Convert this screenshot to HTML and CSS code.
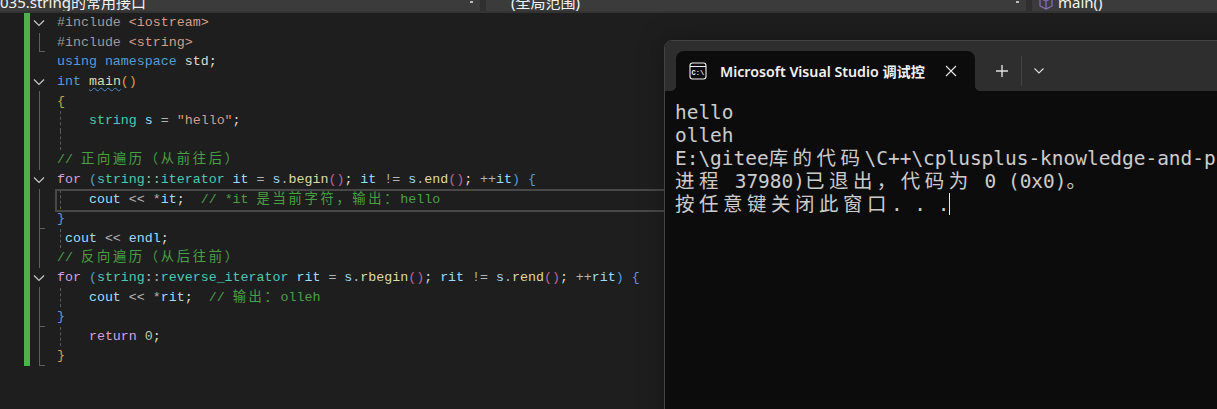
FILE: index.html
```html
<!DOCTYPE html>
<html lang="zh">
<head>
<meta charset="utf-8">
<title>Visual Studio</title>
<link rel="stylesheet" href="styles.css">
</head>
<body>
<div class="app">
  <header class="navbar">
    <div class="combo combo-file"><span class="combo-text">035.string的常用接口</span><span class="combo-arrow"></span></div>
    <div class="combo combo-scope"><span class="combo-text">(全局范围)</span><span class="combo-arrow"></span></div>
    <div class="combo combo-member">
      <svg class="cube" width="16" height="16" viewBox="0 0 16 16"><path d="M8 1 14 4v8l-6 3-6-3V4zM2 4l6 3 6-3M8 7v8" fill="none" stroke="#8a6fc0" stroke-width="1.2"/></svg>
      <span class="combo-text">main()</span>
    </div>
  </header>
  <main class="editor">
    <div class="change-bar"></div>
    <div class="lines">
      <div class="row"><span class="fold open"><svg width="14" height="8" viewBox="0 0 14 8"><path d="M2 1.5 7 6.5 12 1.5" fill="none" stroke="#c8c8c8" stroke-width="1.2"/></svg></span><code class="code"><span class="pp">#include </span><span class="str">&lt;iostream&gt;</span></code></div>
      <div class="row"><span class="fold end"></span><code class="code"><span class="pp">#include </span><span class="str">&lt;string&gt;</span></code></div>
      <div class="row"><span class="fold"></span><code class="code"><span class="kw">using namespace</span> <span class="plain">std;</span></code></div>
      <div class="row"><span class="fold open"><svg width="14" height="8" viewBox="0 0 14 8"><path d="M2 1.5 7 6.5 12 1.5" fill="none" stroke="#c8c8c8" stroke-width="1.2"/></svg></span><code class="code"><span class="kw">int</span> <span class="fn squiggle">main</span><span class="brace-o">()</span></code></div>
      <div class="row"><span class="fold line"></span><code class="code"><span class="brace-o">{</span></code></div>
      <div class="row"><span class="fold line"></span><code class="code guide">    <span class="ty">string</span> <span class="var">s</span> <span class="op">=</span> <span class="str">"hello"</span><span class="plain">;</span></code></div>
      <div class="row"><span class="fold line"></span><code class="code guide"> </code></div>
      <div class="row"><span class="fold line"></span><code class="code"><span class="cm">// <span class="cjk">正向遍历（从前往后）</span></span></code></div>
      <div class="row"><span class="fold open"><svg width="14" height="8" viewBox="0 0 14 8"><path d="M2 1.5 7 6.5 12 1.5" fill="none" stroke="#c8c8c8" stroke-width="1.2"/></svg></span><code class="code"><span class="ctl">for</span> <span class="brace-b">(</span><span class="ty">string</span><span class="op">::</span><span class="ty">iterator</span> <span class="var">it</span> <span class="op">=</span> <span class="var">s</span><span class="op">.</span><span class="fn">begin</span><span class="paren">()</span><span class="plain">;</span> <span class="var">it</span> <span class="op">!=</span> <span class="var">s</span><span class="op">.</span><span class="fn">end</span><span class="paren">()</span><span class="plain">;</span> <span class="op">++</span><span class="var">it</span><span class="brace-b">)</span> <span class="brace-b">{</span></code></div>
      <div class="row current"><span class="fold line"></span><code class="code guide">    <span class="var">cout</span> <span class="op">&lt;&lt;</span> <span class="op">*</span><span class="var">it</span><span class="plain">;</span>  <span class="cm">// *it <span class="cjk">是当前字符，输出：</span>hello</span></code></div>
      <div class="row"><span class="fold tick"></span><code class="code"><span class="brace-b">}</span></code></div>
      <div class="row"><span class="fold line"></span><code class="code guide"> <span class="var">cout</span> <span class="op">&lt;&lt;</span> <span class="var">endl</span><span class="plain">;</span></code></div>
      <div class="row"><span class="fold line"></span><code class="code"><span class="cm">// <span class="cjk">反向遍历（从后往前）</span></span></code></div>
      <div class="row"><span class="fold open"><svg width="14" height="8" viewBox="0 0 14 8"><path d="M2 1.5 7 6.5 12 1.5" fill="none" stroke="#c8c8c8" stroke-width="1.2"/></svg></span><code class="code"><span class="ctl">for</span> <span class="brace-b">(</span><span class="ty">string</span><span class="op">::</span><span class="ty">reverse_iterator</span> <span class="var">rit</span> <span class="op">=</span> <span class="var">s</span><span class="op">.</span><span class="fn">rbegin</span><span class="paren">()</span><span class="plain">;</span> <span class="var">rit</span> <span class="op">!=</span> <span class="var">s</span><span class="op">.</span><span class="fn">rend</span><span class="paren">()</span><span class="plain">;</span> <span class="op">++</span><span class="var">rit</span><span class="brace-b">)</span> <span class="brace-b">{</span></code></div>
      <div class="row"><span class="fold line"></span><code class="code guide">    <span class="var">cout</span> <span class="op">&lt;&lt;</span> <span class="op">*</span><span class="var">rit</span><span class="plain">;</span>  <span class="cm">// <span class="cjk">输出：</span>olleh</span></code></div>
      <div class="row"><span class="fold tick"></span><code class="code"><span class="brace-b">}</span></code></div>
      <div class="row"><span class="fold line"></span><code class="code guide">    <span class="ctl">return</span> <span class="num">0</span><span class="plain">;</span></code></div>
      <div class="row"><span class="fold end"></span><code class="code"><span class="brace-o">}</span></code></div>
    </div>
  </main>
  <section class="terminal">
    <div class="tabstrip">
      <div class="tab">
        <svg class="tab-icon" width="18" height="18" viewBox="0 0 18 18"><rect x="1" y="1" width="16" height="16" rx="2.5" fill="none" stroke="#f0f0f0" stroke-width="1.1"/><path d="M1 4.5H17" stroke="#f0f0f0" stroke-width="1.1"/><text x="2.6" y="13.4" class="tab-icon-text">C:\</text></svg>
        <span class="tab-title">Microsoft Visual Studio 调试控</span>
        <svg class="tab-close" width="12" height="12" viewBox="0 0 12 12"><path d="M1 1 11 11M11 1 1 11" stroke="#e8e8e8" stroke-width="1.1"/></svg>
      </div>
      <svg class="tab-plus" width="14" height="14" viewBox="0 0 14 14"><path d="M7 1V13M1 7H13" stroke="#e0e0e0" stroke-width="1.4"/></svg>
      <span class="tab-sep"></span>
      <svg class="tab-down" width="12" height="8" viewBox="0 0 12 8"><path d="M1.5 1.5 6 6 10.5 1.5" fill="none" stroke="#d8d8d8" stroke-width="1.2"/></svg>
    </div>
    <div class="console">
      <div class="out">hello</div>
      <div class="out">olleh</div>
      <div class="out">E:\gitee<span class="wide">库的代码</span>\C++\cplusplus-knowledge-and-practice\x64\Debug</div>
      <div class="out"><span class="wide">进程</span> 37980)<span class="wide">已退出，代码为</span> 0 (0x0)<span class="wide">。</span></div>
      <div class="out"><span class="wide">按任意键关闭此窗口</span>. . .<span class="caret"></span></div>
    </div>
  </section>
</div>
</body>
</html>
```

FILE: styles.css
```css
* { box-sizing: border-box; }
html, body { margin: 0; height: 100%; background: #1e1e1e; }
.app { position: relative; width: 1217px; height: 409px; overflow: hidden; }

.navbar { display: flex; height: 13px; gap: 6px; background: #2f2f2f; border-bottom: 2px solid #333; overflow: hidden; }
.combo { display: flex; align-items: flex-end; background: #3b3b3b; height: 11px; font: 15px/20px "Noto Sans", "Noto Sans CJK SC", sans-serif; color: #f4f4f4; overflow: hidden; position: relative; white-space: nowrap; }
.combo-file { width: 480px; }
.combo-scope { width: 540px; padding-left: 25px; }
.combo-member { flex: 1; padding-left: 6px; gap: 4px; }
.combo-text { display: block; margin-bottom: -1px; }
.cube { flex: none; margin-bottom: 1px; }
.combo-arrow { position: absolute; right: 7px; bottom: 8px; width: 3px; height: 2px; background: #bbb; }

.editor { display: flex; height: 396px; padding-left: 24px; }
.change-bar { width: 6px; height: 353px; background: #4fb04f; }
.lines { flex: 1; min-width: 0; }
.row { display: flex; height: 19.6px; align-items: center; position: relative; }
.fold { flex: none; width: 27px; height: 100%; position: relative; }
.fold svg { position: absolute; left: 2px; top: 6px; }
.fold.line::before, .fold.tick::before, .fold.end::before { content: ""; position: absolute; left: 9px; top: 0; bottom: 0; border-left: 1px solid #5e5e5e; }
.fold.tick::after, .fold.end::after { content: ""; position: absolute; left: 9px; bottom: 0; width: 6px; border-bottom: 1px solid #5e5e5e; }
.code { font: 13.3px/19.6px "Liberation Mono", "Noto Sans CJK SC", monospace; white-space: pre; color: #dcdcdc; position: relative; top: .3px; display: block; flex: 1; }
.guide::before { content: ""; position: absolute; left: 3px; top: 0; bottom: 0; border-left: 1px dashed #5a5a5a; }
.current::after { content: ""; position: absolute; left: 25px; right: 0; top: 0; height: 19px; border: 2px solid #484848; border-right: 0; }

.pp { color: #9b9b9b; }
.str { color: #d69d85; }
.kw { color: #569cd6; }
.ctl { color: #d8a0df; }
.ty { color: #4ec9b0; }
.var { color: #9cdcfe; }
.fn { color: #dcdcaa; }
.op { color: #b4b4b4; }
.num { color: #b5cea8; }
.plain { color: #dcdcdc; }
.cm { color: #4aa043; }
.cjk { font-family: "Noto Sans CJK SC", sans-serif; letter-spacing: 2.67px; line-height: 0; }
.brace-o { color: #d7a047; }
.brace-b { color: #569cd6; }
.paren { color: #c65f9a; }
.squiggle { text-decoration: underline wavy #4a90d0 1px; text-underline-offset: 2px; }

.terminal { position: absolute; left: 664px; top: 40px; width: 600px; height: 400px; background: #0c0c0c; border: 1px solid #444; border-radius: 8px 0 0 0; box-shadow: 0 0 28px rgba(0,0,0,.28); overflow: hidden; }
.tabstrip { display: flex; align-items: center; height: 50px; background: #2e2e2e; padding: 10px 0 0 11px; }
.tab { display: flex; align-items: center; width: 299px; height: 40px; background: #0c0c0c; border-radius: 8px 8px 0 0; padding-left: 13px; position: relative; }
.tab::before, .tab::after { content: ""; position: absolute; bottom: 0; width: 5px; height: 5px; }
.tab::before { left: -5px; background: radial-gradient(circle at 0 0, #2e2e2e 4.6px, #0c0c0c 5.2px); }
.tab::after { right: -5px; background: radial-gradient(circle at 100% 0, #2e2e2e 4.6px, #0c0c0c 5.2px); }
.tab-icon { flex: none; }
.tab-icon-text { font: bold 7px "Liberation Mono", monospace; fill: #f0f0f0; }
.tab-title { font: 600 14.2px "Noto Sans", "Noto Sans CJK SC", sans-serif; color: #f2f2f2; margin-left: 13px; width: 225px; white-space: nowrap; overflow: hidden; }
.tab-close { flex: none; }
.tab-plus { flex: none; margin-left: 20px; }
.tab-sep { width: 1px; height: 30px; background: #444; margin-left: 12px; }
.tab-down { flex: none; margin-left: 11px; }

.console { padding: 10px 0 0 10px; font: 19.45px/23px "DejaVu Sans Mono", "Noto Sans CJK SC", monospace; color: #cccccc; }
.out { white-space: pre; height: 23px; }
.wide { font-family: "Noto Sans CJK SC", sans-serif; letter-spacing: 4.55px; line-height: 0; }
.caret { display: inline-block; width: 1px; height: 22px; background: #e8e8e8; vertical-align: -4px; }
```
